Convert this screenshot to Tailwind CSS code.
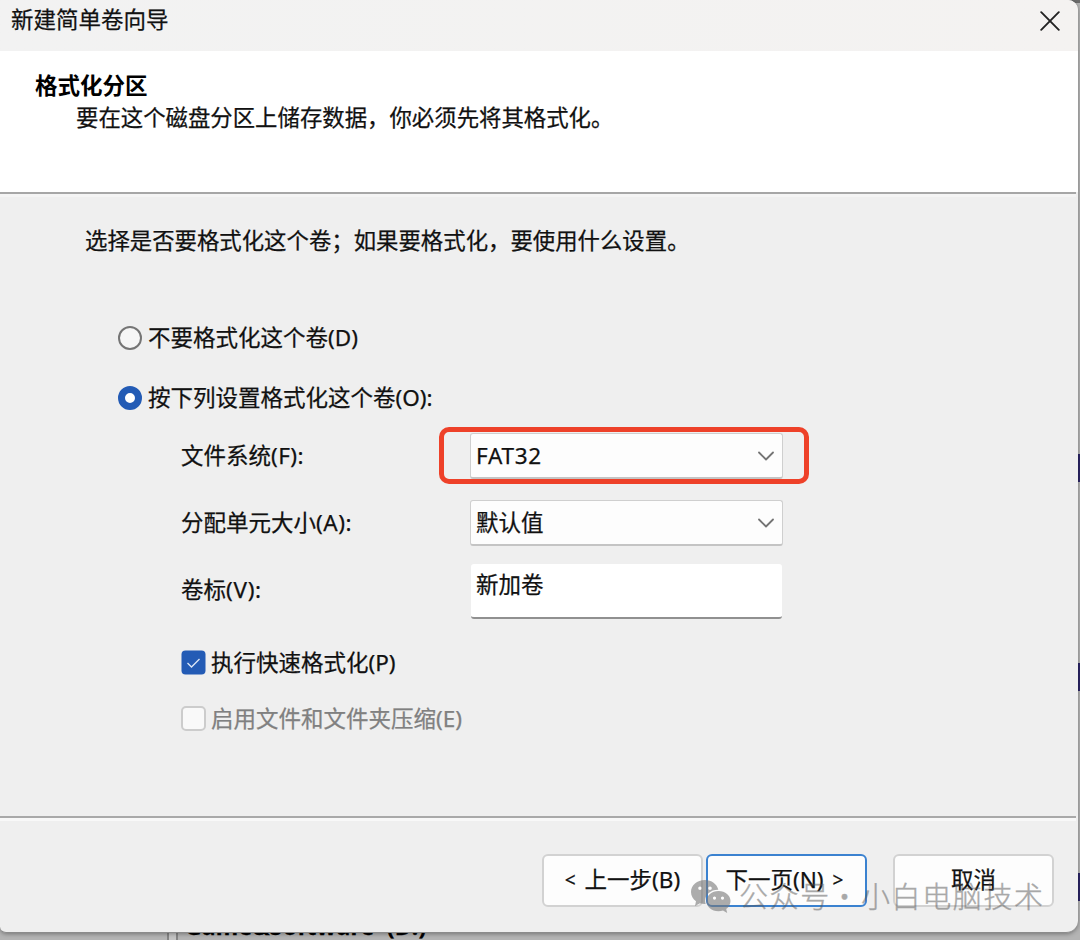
<!DOCTYPE html>
<html lang="zh-CN">
<head>
<meta charset="utf-8">
<title>新建简单卷向导</title>
<script src="https://cdn.jsdelivr.net/npm/@tailwindcss/browser@4"></script>
</head>
<body class="relative w-[1080px] h-[940px] overflow-hidden bg-[#b4b4b4] font-['Noto_Sans','Noto_Sans_CJK_SC',sans-serif] text-[22.5px] leading-8 text-[#111] [-webkit-text-stroke:0.25px_currentColor]">
  <!-- window behind the dialog -->
  <div class="absolute left-[167px] top-[925px] w-[11px] h-[15px] border-x-2 border-[#858585] bg-[#c4c4c4]"></div>
  <div class="absolute left-[185px] top-[911px] w-[260px] leading-[30px] font-bold whitespace-pre text-black text-[23px] tracking-[0.2px]">Game&amp;Software&nbsp; (D:)</div>
  <div class="absolute right-0 top-[454px] w-[2px] h-[28px] bg-[#2b2566]"></div>
  <div class="absolute right-0 top-[663px] w-[2px] h-[28px] bg-[#2b2566]"></div>
  <div class="absolute right-0 top-[873px] w-[2px] h-[28px] bg-[#2b2566]"></div>
  <div class="absolute right-0 top-0 w-[12px] h-[3px] bg-[#6b6b6b]"></div>

  <main class="relative flex flex-col w-[1078px] h-[933px] rounded-tr-[10px] rounded-br-[12px] rounded-bl-[6px] overflow-hidden bg-[#efefef] border-b border-[#8c8c8c] shadow-[0_1px_4px_rgba(0,0,0,0.35)]">
    <header class="flex h-[51px] shrink-0 justify-between bg-linear-to-r from-[#f2f2f2] to-[#f4f2f1] pl-[11px] pr-[18px]">
      <h1 class="mt-1">新建简单卷向导</h1>
      <svg class="mt-[11px] w-5 h-5" viewBox="0 0 20 20" fill="none" stroke="#222" stroke-width="1.9" stroke-linecap="round"><path d="M1.2 1.2 18.8 18.8M18.8 1.2 1.2 18.8"/></svg>
    </header>

    <section class="h-[141px] shrink-0 bg-white pt-[19px] pl-[35px]">
      <h2 class="font-bold text-black [-webkit-text-stroke:0]">格式化分区</h2>
      <p class="pl-[41px] text-[22.4px]">要在这个磁盘分区上储存数据，你必须先将其格式化。</p>
    </section>
    <div class="h-[5px] shrink-0 border-t-2 border-[#a6a6a6] bg-[#f4f4f4] mr-[2px]"></div>

    <section class="flex flex-col h-[619px] shrink-0 pt-7">
      <p class="ml-[85px] text-[22.4px]">选择是否要格式化这个卷；如果要格式化，要使用什么设置。</p>
      <div class="mt-[65px] ml-[118px] flex items-center gap-[6px] h-8">
        <span class="w-6 h-6 rounded-full border-2 border-[#757575] bg-[#f6f6f6]"></span>
        <span>不要格式化这个卷(D)</span>
      </div>
      <div class="mt-7 ml-[118px] flex items-center gap-[6px] h-8">
        <span class="w-6 h-6 rounded-full border-[7px] border-[#235bb5] bg-white"></span>
        <span>按下列设置格式化这个卷(O):</span>
      </div>
      <div class="mt-[19px] ml-[181px] flex items-center">
        <span class="w-[289px]">文件系统<span class="tracking-[0.4px]">(F):</span></span>
        <div class="relative">
          <div class="w-[313px] h-[46px] flex items-center justify-between rounded-[3px] border border-[#cfcfcf] border-b-2 border-b-[#c4c4c4] bg-[#fdfdfd] pl-[5px] pr-2">
            <span class="tracking-[0.7px]">FAT32</span>
            <svg class="w-4 h-[10px]" viewBox="0 0 16 10" fill="none" stroke="#747474" stroke-width="1.8" stroke-linecap="round" stroke-linejoin="round"><path d="M1 1.5 8 8.5 15 1.5"/></svg>
          </div>
          <div class="absolute left-[-31px] top-[-6px] w-[370px] h-[57px] rounded-[10px] border-[5.5px] border-[#ee4129]"></div>
        </div>
      </div>
      <div class="mt-[21px] ml-[181px] flex items-center">
        <span class="w-[289px]">分配单元大小<span class="tracking-[0.5px]">(A):</span></span>
        <div class="w-[313px] h-[46px] flex items-center justify-between rounded-[3px] border border-[#cfcfcf] border-b-2 border-b-[#c4c4c4] bg-[#fdfdfd] pl-[5px] pr-2">
          <span>默认值</span>
          <svg class="w-4 h-[10px]" viewBox="0 0 16 10" fill="none" stroke="#747474" stroke-width="1.8" stroke-linecap="round" stroke-linejoin="round"><path d="M1 1.5 8 8.5 15 1.5"/></svg>
        </div>
      </div>
      <div class="mt-[18px] ml-[181px] flex items-center">
        <span class="w-[290px] pb-[3px]">卷标<span class="tracking-[0.7px]">(V):</span></span>
        <div class="w-[311px] h-[55px] rounded-[3px] border-b-2 border-[#909090] bg-white pl-[5px] pt-[5px]">新加卷</div>
      </div>
      <div class="mt-7 ml-[181px] flex items-center gap-[5px] h-8">
        <svg class="w-[25px] h-[25px] -mt-px" viewBox="0 0 25 25" fill="none"><rect x=".5" y=".5" width="24" height="24" rx="4" fill="#235bb5"/><path d="M6.5 13 10.5 17 18.5 9" stroke="#dce7f7" stroke-width="1.3"/></svg>
        <span>执行快速格式化(P)</span>
      </div>
      <div class="mt-6 ml-[181px] flex items-center gap-[5px] h-8 text-[#808080]">
        <span class="w-[25px] h-[25px] -mt-px rounded-[5px] border-2 border-[#cccccc] bg-[#f9f9f9]"></span>
        <span>启用文件和文件夹压缩(E)</span>
      </div>
    </section>

    <div class="h-[5px] shrink-0 border-t-2 border-[#a9a9a9] bg-[#f8f8f8] mr-[2px]"></div>
    <footer class="flex pt-[33px] pl-[542px]">
      <div class="w-[161px] h-[53px] flex items-center justify-center rounded-[6px] border-2 border-[#d2d2d2] bg-[#fdfdfd] whitespace-pre pb-[2px]"><span class="text-[19px] mr-[9px]">&lt;</span>上一步(B)</div>
      <div class="ml-[3px] w-[161px] h-[53px] flex items-center justify-center rounded-[6px] border-2 border-[#3b82d0] bg-[#fdfdfd] whitespace-pre pb-[2px] pr-[4px]">下一页(N)<span class="text-[19px] ml-[9px]">&gt;</span></div>
      <div class="ml-[26px] w-[161px] h-[53px] flex items-center justify-center rounded-[6px] border-2 border-[#d2d2d2] bg-[#fdfdfd] pb-[2px]">取消</div>
    </footer>
  </main>

  <!-- watermark -->
  <svg class="absolute left-[690px] top-[879px] w-[42px] h-[35px] opacity-60" viewBox="0 0 42 35">
    <path fill="#777" fill-rule="evenodd" d="M15 1C7 1 1 6.200 1 13c0 4 2 7 5 9.200L5 27l5-2.700c1.800.5 3.600.8 5.600.7A11 11 0 0 1 15 22c0-6.500 6-11.500 13.300-11.300C27 5 21.500 1 15 1ZM10 7.500a1.800 1.800 0 1 1 0 3.600 1.800 1.800 0 0 1 0-3.600ZM20 7.500a1.800 1.800 0 1 1 0 3.600 1.800 1.800 0 0 1 0-3.600Z"/>
    <path fill="#777" fill-rule="evenodd" d="M28.500 12C21.600 12 16.500 16.500 16.500 22s5.100 10.200 12 10.200c1.600 0 3.100-.3 4.500-.7l4.200 2.500-1-4c2.600-1.900 4.300-4.700 4.300-8 0-5.500-5.100-10-12-10ZM24.500 17.500a1.600 1.600 0 1 1 0 3.200 1.600 1.600 0 0 1 0-3.200ZM32.500 17.500a1.600 1.600 0 1 1 0 3.200 1.600 1.600 0 0 1 0-3.200Z"/>
  </svg>
  <div class="absolute left-[739px] top-[875px] h-10 flex leading-10 text-[29px] font-light text-[#555] opacity-50 tracking-[1.6px] font-['Noto_Sans_CJK_SC',sans-serif] [-webkit-text-stroke:0.4px_currentColor] whitespace-nowrap"><span class="w-[91px]">公众号</span><span class="w-[31px]">·</span><span>小白电脑技术</span></div>
</body>
</html>
